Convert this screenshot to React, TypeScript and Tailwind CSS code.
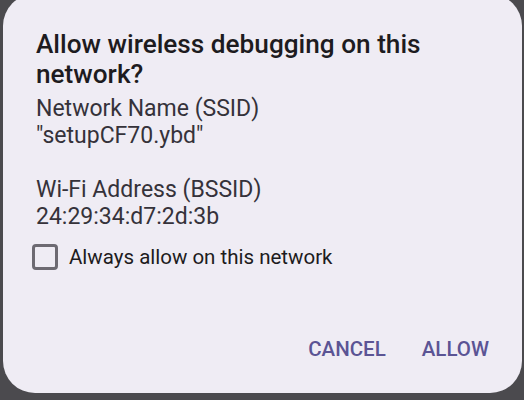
export default function App() {
  return (
    <div className="h-[400px] w-[524px] overflow-hidden bg-[#4b4a4e] font-['Roboto',sans-serif]">
      <div className="ml-[3px] mt-[-6px] flex h-[399px] w-[519px] flex-col rounded-[32px] bg-[#efecf4] pl-[33px] pr-[33px] pt-[35px]">
        <h1 className="text-[26.2px] leading-[30px] font-medium text-[#1d1b20]">
          Allow wireless debugging on this network?
        </h1>
        <div className="mt-[6px] text-[23px] leading-[27px] text-[#35323a]">
          <p>Network Name (SSID)</p>
          <p>"setupCF70.ybd"</p>
          <p className="mt-[27px]">Wi-Fi Address (BSSID)</p>
          <p>24:29:34:d7:2d:3b</p>
        </div>
        <label className="ml-[-4px] mt-[13px] flex h-[28px] items-center gap-[11px]">
          <span className="h-[26px] w-[26px] rounded-[4px] border-[3px] border-[#6d6a72]" />
          <span className="text-[20.5px] text-[#1d1b20]">Always allow on this network</span>
        </label>
        <div className="mt-auto mb-[32px] flex justify-end gap-[36px] text-[20.5px] leading-[24px] font-medium text-[#5b5494]">
          <button>CANCEL</button>
          <button>ALLOW</button>
        </div>
      </div>
    </div>
  )
}
